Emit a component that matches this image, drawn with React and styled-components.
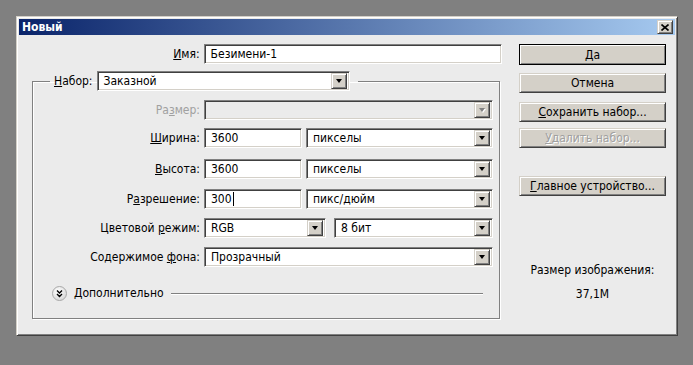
import React from 'react'
import styled, { createGlobalStyle } from 'styled-components'

const GlobalStyle = createGlobalStyle`
  html, body {
    margin: 0;
    padding: 0;
    background: #808080;
  }
  body {
    font-family: 'DejaVu Sans Condensed', 'DejaVu Sans', sans-serif;
    font-size: 12px;
    color: #000;
  }
`

const Screen = styled.div`
  height: 365px;
  box-sizing: border-box;
  padding: 16px 0 0 16px;
`

const Window = styled.div`
  width: 662px;
  height: 320px;
  box-sizing: border-box;
  background: #ebebeb;
  border: 1px solid;
  border-color: #d4d0c8 #404040 #404040 #d4d0c8;
  box-shadow: inset 1px 1px #fff, inset -1px -1px #808080;
  padding: 2px;
  display: flex;
  flex-direction: column;
`

const TitleBar = styled.div`
  height: 16px;
  display: flex;
  align-items: center;
  justify-content: space-between;
  padding: 0 2px 0 3px;
  background: linear-gradient(to right, #0a246a, #a6caf0);
`

const Title = styled.span`
  color: #fff;
  font-weight: bold;
  font-size: 12px;
`

const Raised = `
  background: #d4d0c8;
  border: 1px solid;
  border-color: #d4d0c8 #404040 #404040 #d4d0c8;
  box-shadow: inset 1px 1px #fff, inset -1px -1px #808080;
  box-sizing: border-box;
`

const CloseButton = styled.div`
  ${Raised}
  width: 16px;
  height: 14px;
  display: flex;
  align-items: center;
  justify-content: center;
`

const Body = styled.div`
  display: flex;
  gap: 17px;
  padding-top: 9px;
`

const LeftColumn = styled.div`
  width: 483px;
  display: flex;
  flex-direction: column;
`

const RightColumn = styled.div`
  width: 147px;
  display: flex;
  flex-direction: column;
  align-items: stretch;
`

const Row = styled.div`
  display: flex;
  align-items: center;
  height: 20px;
  margin-top: ${({ $top }) => $top || 0}px;
`

const Label = styled.label`
  width: ${({ $w }) => $w}px;
  margin-right: 4px;
  text-align: right;
  white-space: nowrap;
  color: ${({ $disabled }) => $disabled ? '#a0a0a0' : '#000'};
`

const Sunken = styled.div`
  width: ${({ $w }) => $w}px;
  height: 20px;
  margin-left: ${({ $gap }) => $gap || 0}px;
  box-sizing: border-box;
  border: 1px solid;
  border-color: #808080 #fff #fff #808080;
  box-shadow: inset 1px 1px #404040, inset -1px -1px #d4d0c8;
  background: ${({ $disabled }) => $disabled ? '#ebebeb' : '#fff'};
  padding: 2px 2px 2px 6px;
  display: flex;
  align-items: center;
  white-space: nowrap;
`

const Value = styled.span`
  flex: 1;
  display: flex;
  align-items: center;
`

const Caret = styled.span`
  display: inline-block;
  width: 1px;
  height: 14px;
  margin-left: 1px;
  background: #000;
`

const DropButton = styled.div`
  ${Raised}
  width: 16px;
  height: 16px;
  display: flex;
  align-items: center;
  justify-content: center;
`

const Arrow = styled.span`
  width: 0;
  height: 0;
  border-left: 3.5px solid transparent;
  border-right: 3.5px solid transparent;
  border-top: 4px solid ${({ $disabled }) => $disabled ? '#808080' : '#000'};
  filter: ${({ $disabled }) => $disabled ? 'drop-shadow(1px 1px 0 #fff)' : 'none'};
`

const Group = styled.fieldset`
  width: 468px;
  margin: 7px 0 0 13px;
  padding: 0 0 17px 0;
  box-sizing: border-box;
  border: 1px solid #808080;
  box-shadow: 1px 1px 0 #fff, inset 1px 1px 0 #fff;
`

const Legend = styled.legend`
  margin-left: 17px;
  padding: 0 8px 0 4px;
  display: flex;
  align-items: center;
  height: 20px;
`

const LegendLabel = styled.label`
  margin-right: 4px;
`

const Advanced = styled.div`
  display: flex;
  align-items: center;
  height: 16px;
  margin: 18px 16px 0 19px;
`

const AdvancedText = styled.span`
  margin: 0 7px;
`

const Rule = styled.div`
  flex: 1;
  height: 1px;
  background: #808080;
  box-shadow: 0 1px 0 #fff;
`

const Button = styled.div`
  ${Raised}
  height: ${({ $default }) => $default ? 21 : 20}px;
  margin-top: ${({ $top }) => $top}px;
  display: flex;
  align-items: center;
  justify-content: center;
  ${({ $default }) => $default && 'outline: 1px solid #000; outline-offset: -1px;'}
  color: ${({ $disabled }) => $disabled ? '#a0a0a0' : '#000'};
  text-shadow: ${({ $disabled }) => $disabled ? '1px 1px 0 #fff' : 'none'};
`

const Info = styled.div`
  text-align: center;
  line-height: 14px;
  margin-top: ${({ $top }) => $top}px;
`

const Combo = ({ w, gap, value, disabled }) => (
  <Sunken $w={w} $gap={gap} $disabled={disabled}>
    <Value>{value}</Value>
    <DropButton>
      <Arrow $disabled={disabled} />
    </DropButton>
  </Sunken>
)

const Edit = ({ w, value, caret }) => (
  <Sunken $w={w}>
    <Value>
      {value}
      {caret && <Caret />}
    </Value>
  </Sunken>
)

const AdvancedIcon = () => (
  <svg width='15' height='15' viewBox='0 0 15 15'>
    <defs>
      <radialGradient id='adv' cx='40%' cy='35%' r='70%'>
        <stop offset='0%' stopColor='#ffffff' />
        <stop offset='100%' stopColor='#d6d6d6' />
      </radialGradient>
    </defs>
    <circle cx='7.5' cy='7.5' r='7' fill='url(#adv)' stroke='#a8a8a8' />
    <path d='M5 4.5 L7.5 7 L10 4.5 M5 8 L7.5 10.5 L10 8' fill='none' stroke='#000' strokeWidth='1.4' />
  </svg>
)

export default function App () {
  return (
    <Screen>
      <GlobalStyle />
      <Window>
        <TitleBar>
          <Title>Новый</Title>
          <CloseButton>
            <svg width='8' height='7' viewBox='0 0 8 7'>
              <path d='M0.5 0.5 L7.5 6.5 M7.5 0.5 L0.5 6.5' stroke='#000' strokeWidth='1.6' />
            </svg>
          </CloseButton>
        </TitleBar>
        <Body>
          <LeftColumn>
            <Row>
              <Label $w={181}><u>И</u>мя:</Label>
              <Edit w={299} value='Безимени-1' />
            </Row>
            <Group>
              <Legend>
                <LegendLabel><u>Н</u>абор:</LegendLabel>
                <Combo w={253} value='Заказной' />
              </Legend>
              <Row $top={9}>
                <Label $w={167} $disabled>Ра<u>з</u>мер:</Label>
                <Combo w={289} disabled />
              </Row>
              <Row $top={8}>
                <Label $w={167}><u>Ш</u>ирина:</Label>
                <Edit w={98} value='3600' />
                <Combo w={187} gap={4} value='пикселы' />
              </Row>
              <Row $top={11}>
                <Label $w={167}><u>В</u>ысота:</Label>
                <Edit w={98} value='3600' />
                <Combo w={187} gap={4} value='пикселы' />
              </Row>
              <Row $top={10}>
                <Label $w={167}>Р<u>а</u>зрешение:</Label>
                <Edit w={98} value='300' caret />
                <Combo w={187} gap={4} value='пикс/дюйм' />
              </Row>
              <Row $top={9}>
                <Label $w={167}>Цветовой <u>р</u>ежим:</Label>
                <Combo w={122} value='RGB' />
                <Combo w={159} gap={8} value='8 бит' />
              </Row>
              <Row $top={9}>
                <Label $w={167}>Содержимое <u>ф</u>она:</Label>
                <Combo w={289} value='Прозрачный' />
              </Row>
              <Advanced>
                <AdvancedIcon />
                <AdvancedText>Дополнительно</AdvancedText>
                <Rule />
              </Advanced>
            </Group>
          </LeftColumn>
          <RightColumn>
            <Button $default $top={0}>Да</Button>
            <Button $top={8}>Отмена</Button>
            <Button $top={9}><span><u>С</u>охранить набор...</span></Button>
            <Button $top={6} $disabled><span><u>У</u>далить набор...</span></Button>
            <Button $top={28}><span><u>Г</u>лавное устройство...</span></Button>
            <Info $top={67}>Размер изображения:</Info>
            <Info $top={10}>37,1M</Info>
          </RightColumn>
        </Body>
      </Window>
    </Screen>
  )
}
